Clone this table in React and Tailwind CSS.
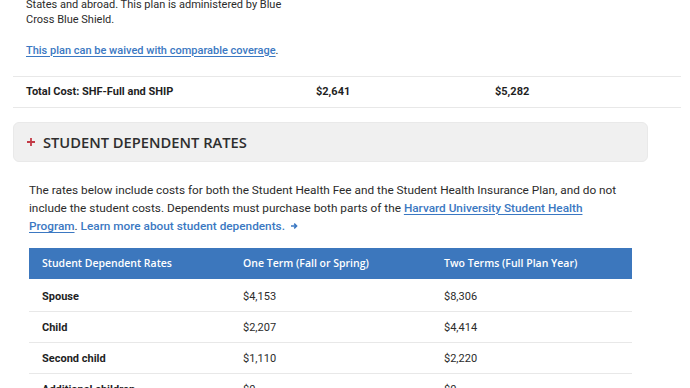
import React from 'react';

const rows = [
  { name: 'Spouse', one: '$4,153', two: '$8,306' },
  { name: 'Child', one: '$2,207', two: '$4,414' },
  { name: 'Second child', one: '$1,110', two: '$2,220' },
  { name: 'Additional children', one: '$0', two: '$0' },
];

const App = () => {
  return (
    <div className="w-[690px] h-[388px] overflow-hidden bg-white font-['Roboto',sans-serif] text-[#2b2b2b]">
      {/* Plan description tail */}
      <div className="pl-[26px] -mt-[3.5px]">
        <p className="w-[270px] text-[11px] leading-[15px]">
          States and abroad. This plan is administered by Blue Cross Blue Shield.
        </p>
        <p className="mt-[16px] text-[11px] leading-[15px]">
          <a href="#" className="font-medium text-[#3b78c2] underline underline-offset-2">
            This plan can be waived with comparable coverage
          </a>
          .
        </p>
      </div>

      {/* Total cost row */}
      <div className="mt-[18.5px] ml-[13px] w-[668px] h-[32px] flex items-center border-y border-[#e8e8e8] text-[11px] font-bold text-[#1f1f1f]">
        <span className="pl-[13px] w-[303px]">Total Cost: SHF-Full and SHIP</span>
        <span className="w-[179px]">$2,641</span>
        <span>$5,282</span>
      </div>

      {/* Accordion */}
      <div className="mt-[14px] ml-[13px] w-[635px] h-[40px] flex items-center gap-[8px] pl-[13px] rounded-[6px] bg-[#f0f0f0] border border-[#e9e9e9]">
        <svg width="8" height="8" viewBox="0 0 8 8" className="shrink-0 -mt-[1px]">
          <path d="M4 0v8M0 4h8" stroke="#c33a46" strokeWidth="1.8" />
        </svg>
        <h2 className="font-['Open_Sans',sans-serif] font-semibold text-[14.7px] text-[#2e2e2e]">
          STUDENT DEPENDENT RATES
        </h2>
      </div>

      {/* Intro paragraph */}
      <p className="mt-[19px] ml-[29px] w-[596px] text-[11.8px] leading-[18px]">
        The rates below include costs for both the Student Health Fee and the Student Health Insurance Plan, and do not include the student costs. Dependents must purchase both parts of the{' '}
        <a href="#" className="font-medium text-[#3b78c2] underline underline-offset-2">
          Harvard University Student Health Program
        </a>
        .{' '}
        <a href="#" className="font-medium text-[#3b78c2]">
          Learn more about student dependents.
          <svg className="inline-block ml-[5px] -mt-[2px]" width="8" height="8" viewBox="0 0 8 8" fill="none">
            <path d="M1 4h5.5M4.2 1.6 6.6 4 4.2 6.4" stroke="#3b78c2" strokeWidth="1.5" />
          </svg>
        </a>
      </p>

      {/* Rates table */}
      <table className="mt-[13px] ml-[29px] w-[603px] table-fixed border-collapse text-[11px]">
        <thead>
          <tr className="bg-[#3c77bd] h-[31px] text-white font-['Open_Sans',sans-serif] text-[10.5px]">
            <th className="w-1/3 pl-[13px] text-left font-semibold">Student Dependent Rates</th>
            <th className="w-1/3 pl-[13px] text-left font-semibold">One Term (Fall or Spring)</th>
            <th className="w-1/3 pl-[13px] text-left font-semibold">Two Terms (Full Plan Year)</th>
          </tr>
        </thead>
        <tbody>
          {rows.map((r, i) => (
            <tr key={r.name} className={`${i === 0 ? 'h-[32px]' : 'h-[31px]'} border-b border-[#e8e8e8]`}>
              <td className="pl-[13px] pt-[4px] font-bold text-[#1f1f1f]">{r.name}</td>
              <td className="pl-[13px] pt-[4px]">{r.one}</td>
              <td className="pl-[13px] pt-[4px]">{r.two}</td>
            </tr>
          ))}
        </tbody>
      </table>
    </div>
  );
};

export default App;
